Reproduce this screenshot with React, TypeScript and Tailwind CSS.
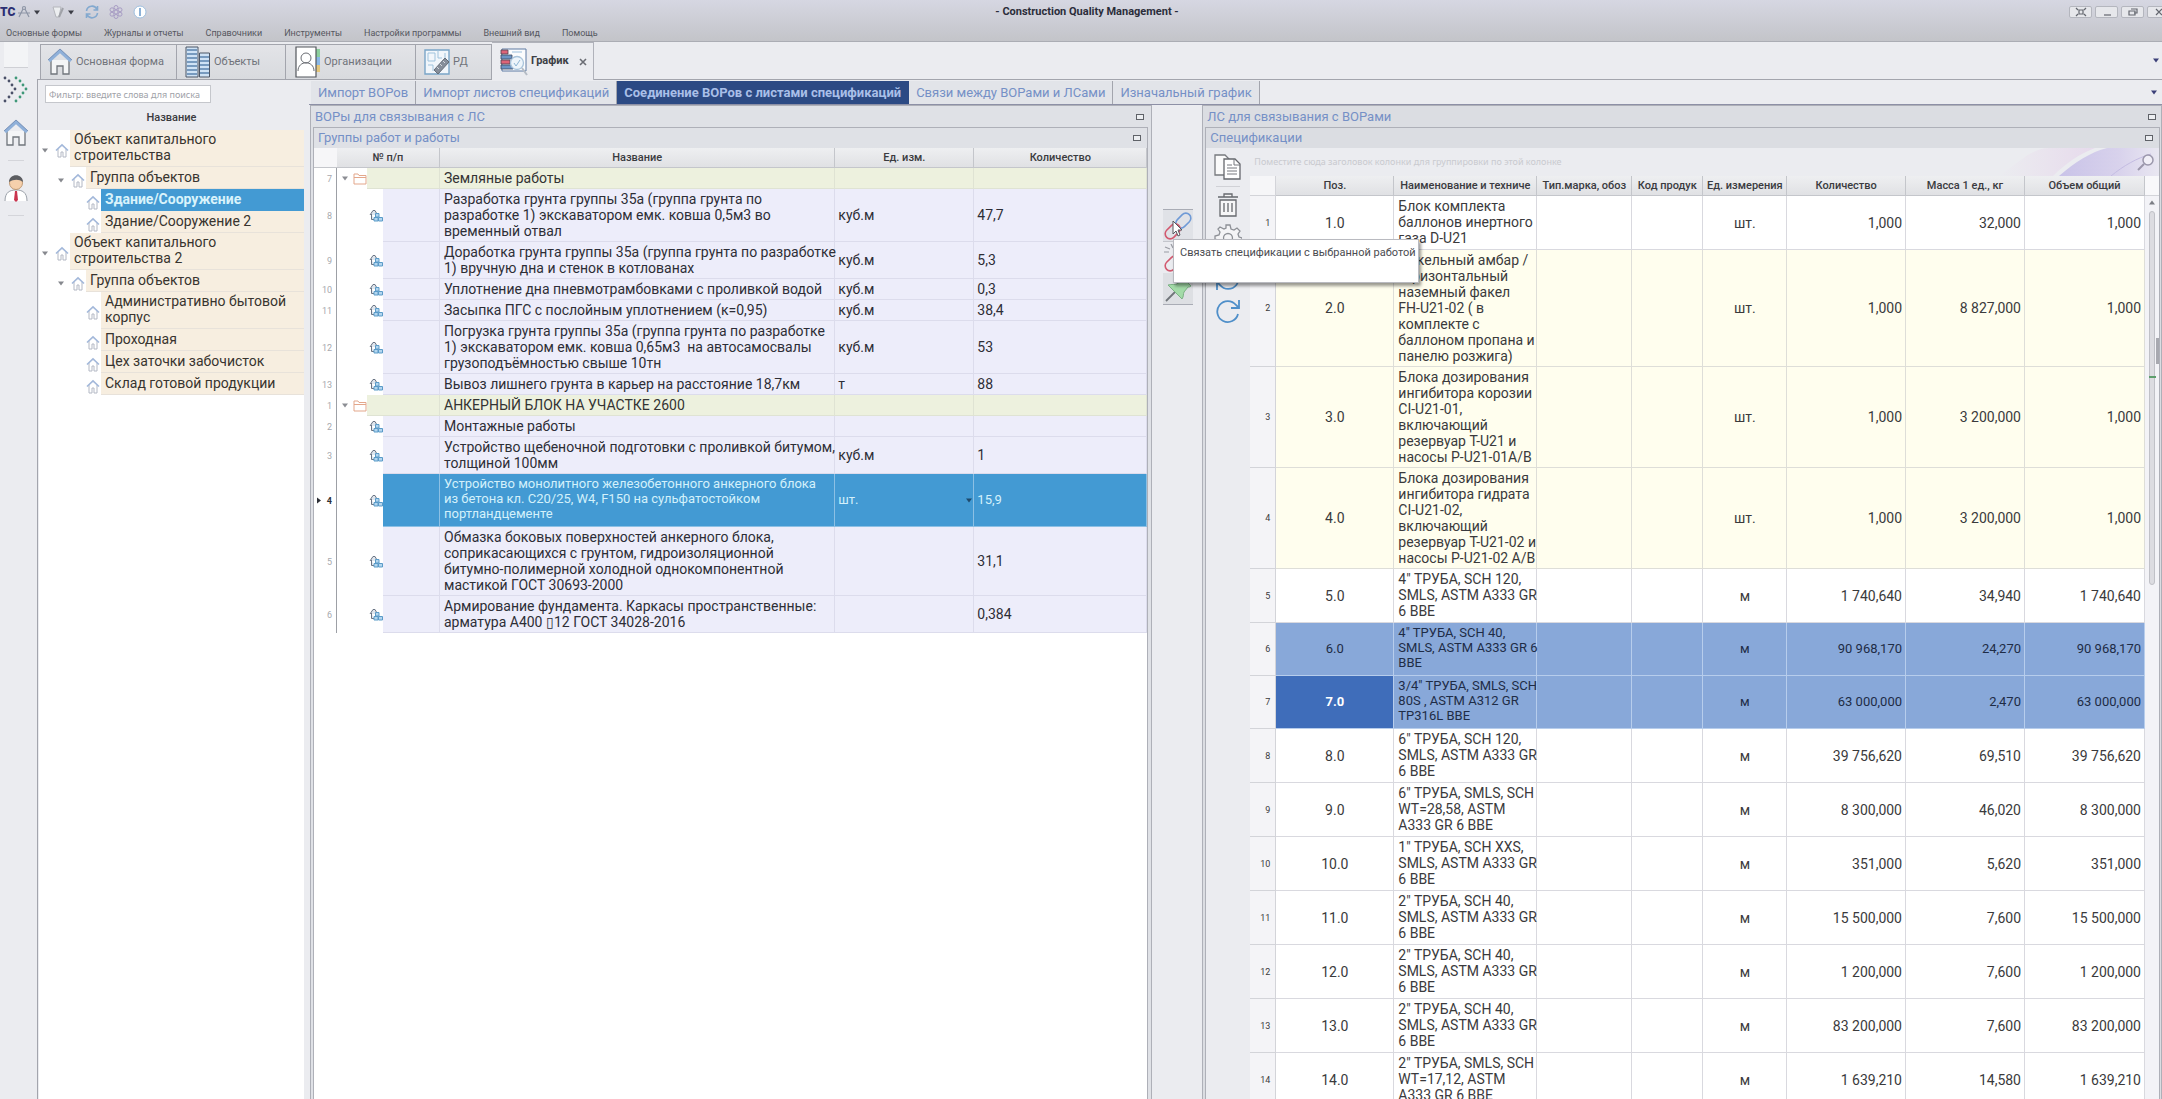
import React from "react";
import clsx from "clsx";

type TreeItem = {
  name: string;
  level: number;
  open?: boolean;
  selected?: boolean;
  tall?: boolean;
};

const tree: TreeItem[] = [
  { name: "Объект капитального\nстроительства", level: 0, open: true, tall: true },
  { name: "Группа объектов", level: 1, open: true },
  { name: "Здание/Сооружение", level: 2, selected: true },
  { name: "Здание/Сооружение 2", level: 2 },
  { name: "Объект капитального\nстроительства 2", level: 0, open: true, tall: true },
  { name: "Группа объектов", level: 1, open: true },
  { name: "Административно бытовой\nкорпус", level: 2, tall: true },
  { name: "Проходная", level: 2 },
  { name: "Цех заточки забочисток", level: 2 },
  { name: "Склад готовой продукции", level: 2 },
];

type Work = {
  n: number;
  name: string;
  unit?: string;
  qty?: string;
  group?: boolean;
  selected?: boolean;
};

const works: Work[] = [
  { n: 7, name: "Земляные работы", group: true },
  {
    n: 8,
    name: "Разработка грунта группы 35а (группа грунта по\nразработке 1) экскаватором емк. ковша 0,5м3 во\nвременный отвал",
    unit: "куб.м",
    qty: "47,7",
  },
  {
    n: 9,
    name: "Доработка грунта группы 35а (группа грунта по разработке\n1) вручную дна и стенок в котлованах",
    unit: "куб.м",
    qty: "5,3",
  },
  { n: 10, name: "Уплотнение дна пневмотрамбовками с проливкой водой", unit: "куб.м", qty: "0,3" },
  { n: 11, name: "Засыпка ПГС с послойным уплотнением (к=0,95)", unit: "куб.м", qty: "38,4" },
  {
    n: 12,
    name: "Погрузка грунта группы 35а (группа грунта по разработке\n1) экскаватором емк. ковша 0,65м3  на автосамосвалы\nгрузоподъёмностью свыше 10тн",
    unit: "куб.м",
    qty: "53",
  },
  { n: 13, name: "Вывоз лишнего грунта в карьер на расстояние 18,7км", unit: "т", qty: "88" },
  { n: 1, name: "АНКЕРНЫЙ БЛОК НА УЧАСТКЕ 2600", group: true },
  { n: 2, name: "Монтажные работы" },
  {
    n: 3,
    name: "Устройство щебеночной подготовки с проливкой битумом,\nтолщиной 100мм",
    unit: "куб.м",
    qty: "1",
  },
  {
    n: 4,
    name: "Устройство монолитного железобетонного анкерного блока\nиз бетона кл. C20/25, W4, F150 на сульфатостойком\nпортландцементе",
    unit: "шт.",
    qty: "15,9",
    selected: true,
  },
  {
    n: 5,
    name: "Обмазка боковых поверхностей анкерного блока,\nсоприкасающихся с грунтом, гидроизоляционной\nбитумно-полимерной холодной однокомпонентной\nмастикой ГОСТ 30693-2000",
    qty: "31,1",
  },
  {
    n: 6,
    name: "Армирование фундамента. Каркасы пространственные:\nарматура А400 ▯12 ГОСТ 34028-2016",
    qty: "0,384",
  },
];

type Spec = {
  name: string;
  unit: string;
  qty: string;
  mass: string;
  total: string;
  tone?: "cream" | "marked";
};

const specs: Spec[] = [
  { name: "Блок комплекта\nбаллонов инертного\nгаза D-U21", unit: "шт.", qty: "1,000", mass: "32,000", total: "1,000" },
  {
    name: "Факельный амбар /\nгоризонтальный\nназемный факел\nFH-U21-02 ( в\nкомплекте с\nбаллоном пропана и\nпанелю розжига)",
    unit: "шт.",
    qty: "1,000",
    mass: "8 827,000",
    total: "1,000",
    tone: "cream",
  },
  {
    name: "Блока дозирования\nингибитора корозии\nCI-U21-01,\nвключающий\nрезервуар T-U21 и\nнасосы P-U21-01A/B",
    unit: "шт.",
    qty: "1,000",
    mass: "3 200,000",
    total: "1,000",
    tone: "cream",
  },
  {
    name: "Блока дозирования\nингибитора гидрата\nCI-U21-02,\nвключающий\nрезервуар T-U21-02 и\nнасосы P-U21-02 A/B",
    unit: "шт.",
    qty: "1,000",
    mass: "3 200,000",
    total: "1,000",
    tone: "cream",
  },
  { name: '4" ТРУБА, SCH 120,\nSMLS, ASTM A333 GR\n6 BBE', unit: "м", qty: "1 740,640", mass: "34,940", total: "1 740,640" },
  { name: '4" ТРУБА, SCH 40,\nSMLS, ASTM A333 GR 6\nBBE', unit: "м", qty: "90 968,170", mass: "24,270", total: "90 968,170", tone: "marked" },
  { name: '3/4" ТРУБА, SMLS, SCH\n80S , ASTM A312 GR\nTP316L BBE', unit: "м", qty: "63 000,000", mass: "2,470", total: "63 000,000", tone: "marked" },
  { name: '6" ТРУБА, SCH 120,\nSMLS, ASTM A333 GR\n6 BBE', unit: "м", qty: "39 756,620", mass: "69,510", total: "39 756,620" },
  { name: '6" ТРУБА, SMLS, SCH\nWT=28,58, ASTM\nA333 GR 6 BBE', unit: "м", qty: "8 300,000", mass: "46,020", total: "8 300,000" },
  { name: '1" ТРУБА, SCH XXS,\nSMLS, ASTM A333 GR\n6 BBE', unit: "м", qty: "351,000", mass: "5,620", total: "351,000" },
  { name: '2" ТРУБА, SCH 40,\nSMLS, ASTM A333 GR\n6 BBE', unit: "м", qty: "15 500,000", mass: "7,600", total: "15 500,000" },
  { name: '2" ТРУБА, SCH 40,\nSMLS, ASTM A333 GR\n6 BBE', unit: "м", qty: "1 200,000", mass: "7,600", total: "1 200,000" },
  { name: '2" ТРУБА, SCH 40,\nSMLS, ASTM A333 GR\n6 BBE', unit: "м", qty: "83 200,000", mass: "7,600", total: "83 200,000" },
  { name: '2" ТРУБА, SMLS, SCH\nWT=17,12, ASTM\nA333 GR 6 BBE', unit: "м", qty: "1 639,210", mass: "14,580", total: "1 639,210" },
];

function HouseIcon({ className }: { className?: string }) {
  return (
    <svg viewBox="0 0 26 28" fill="none" className={className}>
      <path d="M4 12v14h6v-8h6v8h6V12" fill="#f4f5f7" stroke="#70757c" strokeWidth="1.3" />
      <path d="M2 13 13 3l11 10" stroke="#8fb0d9" strokeWidth="3.2" />
      <path d="M1 12 13 1l12 11" stroke="#7088ad" strokeWidth="0.8" />
    </svg>
  );
}

function SmallHouse() {
  return (
    <svg viewBox="0 0 14 15" fill="none" className="h-[15px] w-[14px] shrink-0">
      <path d="M3 6v8h3V9h2v5h3V6" stroke="#b3b8c4" strokeWidth="1" />
      <path d="M1 7.500 7 1.800l6 5.700" stroke="#a3b8da" strokeWidth="1.600" />
    </svg>
  );
}

function Caret({ className }: { className?: string }) {
  return (
    <svg viewBox="0 0 8 5" className={clsx("h-[5px] w-2 shrink-0", className)}>
      <path d="M1 0.500h6L4 4.500z" fill="currentColor" />
    </svg>
  );
}

function BuildingsIcon() {
  return (
    <svg viewBox="0 0 26 32" className="h-8 w-[26px]">
      <path d="M1 1h12v30H1z" fill="#cfe2f5" stroke="#4d5666" />
      <path d="M14.500 7h10v24h-10z" fill="#cfe2f5" stroke="#4d5666" />
      <path d="M2 4h10M2 8h10M2 12h10M2 16h10M2 20h10M2 24h10M2 28h10" stroke="#5b82ad" strokeWidth="1.600" />
      <path d="M15 11h9M15 15h9M15 19h9M15 23h9M15 27h9" stroke="#5b82ad" strokeWidth="1.600" />
    </svg>
  );
}

function ContactsIcon() {
  return (
    <svg viewBox="0 0 26 32" className="h-8 w-[26px]" fill="none">
      <path d="M21 3h4v8h-4z" fill="#8ccf9d" />
      <path d="M21 11h4v8h-4z" fill="#8ab8e6" />
      <path d="M21 19h4v7h-4z" fill="#e3c67c" />
      <path d="M1 1h20v30H1z" fill="#fff" stroke="#53565c" strokeWidth="1.200" />
      <circle cx="11" cy="12" r="5" stroke="#6a6d73" />
      <path d="M3 25c0-11 16-11 16 0" stroke="#6a6d73" />
    </svg>
  );
}

function BlueprintIcon() {
  return (
    <svg viewBox="0 0 26 28" className="h-7 w-[26px]" fill="none">
      <path d="M1 2h24v24H1z" fill="#f1f6fb" stroke="#7aa5c8" strokeWidth="1.400" />
      <path d="M4 5h7v8H4zM14 2v8h4M21 5v5M4 17h5v6" stroke="#9fc3dd" />
      <path d="m10 22 11-12 4 4-11 12z" fill="#868e9a" stroke="#666d78" />
      <path d="m13 19 2 2m1-5 2 2m1-5 2 2" stroke="#d4d8de" />
    </svg>
  );
}

function ChartIcon() {
  return (
    <svg viewBox="0 0 28 30" className="h-[30px] w-7" fill="none">
      <path d="M2 2h24v22H2z" fill="#fbfcfd" stroke="#5f7ba3" />
      <path d="M1 3h7v4H1zM1 13h9v4H1z" fill="#dd6478" stroke="#4b4154" strokeWidth="0.800" />
      <path d="M1 8h11v4H1zM1 18h12v4H1z" fill="#6c94c4" stroke="#3c4a63" strokeWidth="0.800" />
      <path d="M12 5h10" stroke="#9dc0dd" />
      <circle cx="17" cy="16" r="6.500" fill="#eef5fb" stroke="#a9c4db" strokeWidth="1.300" />
      <path d="m14 16 2 3 4-6" stroke="#8fb6d4" />
      <path d="m22 21 5 7" stroke="#b5bcc5" strokeWidth="2" />
    </svg>
  );
}

function PersonIcon() {
  return (
    <svg viewBox="0 0 24 28" className="h-7 w-6" fill="none">
      <path d="M1 27c0-9 5-11 11-11s11 2 11 11" fill="#fff" stroke="#9aa0a8" />
      <circle cx="12" cy="9" r="6.500" fill="#f6d0ac" stroke="#b4895f" strokeWidth="0.800" />
      <path d="M5 8c0-9 14-9 14 0-4-3-9-3-14 0z" fill="#5c5d61" />
      <path d="M11 17h2l1 9-2 2-2-2z" fill="#c9344e" />
    </svg>
  );
}

function DotsIcon() {
  const dots = [
    [2, 2], [6, 5], [9, 9], [12, 13], [9, 17], [6, 21], [2, 25],
  ];
  return (
    <svg viewBox="0 0 26 28" className="h-7 w-[26px]">
      {dots.map(([x, y]) => (
        <circle key={y} cx={x} cy={y} r="1.400" fill="#4a5068" />
      ))}
      {dots.map(([x, y]) => (
        <circle key={y} cx={x + 11} cy={y} r="1.400" fill="#3f9878" />
      ))}
    </svg>
  );
}

function FolderIcon() {
  return (
    <svg viewBox="0 0 14 12" className="h-3 w-[14px] shrink-0" fill="none">
      <path d="M1 11V1h4l1 1.500h7V11zM1 4.500h12" stroke="#e3a78b" />
    </svg>
  );
}

function WorkIcon() {
  return (
    <svg viewBox="0 0 14 13" className="h-[13px] w-[14px] shrink-0" fill="none">
      <path d="M1 6 4 1.500h2L8.500 6M2.500 5v5.500H5" fill="#dfe6ee" stroke="#6a7484" />
      <path d="M6.500 4.500H10V8H6.500zM5 8.500h4V12H5zM9.500 8.500h4V12h-4z" fill="#b3d6ef" stroke="#5a9bc8" />
    </svg>
  );
}

function CopyIcon() {
  return (
    <svg viewBox="0 0 28 28" className="size-7" fill="none">
      <path d="M1 2h10l4 4v16H1z" fill="#fafafa" stroke="#77797e" strokeWidth="1.300" />
      <path d="M10 6h11l5 5v15H10z" fill="#fff" stroke="#66686d" strokeWidth="1.300" />
      <path d="M20 6v6h6M13 12h5M13 15h10M13 18h10M13 21h10" stroke="#77797e" />
    </svg>
  );
}

function TrashIcon() {
  return (
    <svg viewBox="0 0 22 26" className="h-[26px] w-[22px]" fill="none" stroke="#66686d" strokeWidth="1.300">
      <path d="M1 5h20M7 5V2h8v3M3 8v16h16V8z" fill="#f6f6f7" />
      <path d="M7 11v9M11 11v9M15 11v9" />
    </svg>
  );
}

function GearIcon() {
  return (
    <svg viewBox="0 0 28 28" className="size-7" fill="none" stroke="#8d9096" strokeWidth="1.300">
      <path
        d="M12 2h4l1 4 3 1 3-2 3 3-2 3 1 3 3 1v3l-4 1-1 3 2 3-3 2-3-2-3 1-1 2h-3l-1-3-3-1-3 2-2-3 2-3-1-3-3-1v-3l4-1 1-3-2-3 2-2 4 2 2-1z"
        fill="#f4f4f6"
      />
      <circle cx="14" cy="15" r="4.500" />
    </svg>
  );
}

function ReloadIcon({ className }: { className?: string }) {
  return (
    <svg viewBox="0 0 26 26" className={clsx("size-[26px]", className)} fill="none" stroke="#4f8fc9" strokeWidth="1.800">
      <path d="M23 16a10.500 10.500 0 1 1-2-9l3 3" />
      <path d="M24 2v8h-8" />
    </svg>
  );
}

function LinkIcon({ broken }: { broken?: boolean }) {
  return (
    <svg viewBox="0 0 30 28" className="h-7 w-[30px]" fill="none" strokeWidth="1.600">
      <rect x="12" y="4" width="17" height="10" rx="5" transform="rotate(-45 20 9)" stroke="#6f9ad6" />
      <rect x="1" y="14" width="17" height="10" rx="5" transform="rotate(-45 10 19)" stroke="#d2596f" />
      {broken && <path d="M2 3l5 2M1 8h5M8 0l2 4" stroke="#9a9ca3" strokeWidth="1.200" />}
    </svg>
  );
}

function PinIcon() {
  return (
    <svg viewBox="0 0 28 26" className="h-[26px] w-7" fill="none">
      <path d="m2 24 10-10" stroke="#70757a" strokeWidth="1.800" />
      <path d="M4 8c4-1 7 0 9-1l5-4c0-1 0-2 1-2l8 8c-1 1-2 1-3 1l-4 5c-1 2 0 4-2 7z" fill="#a3dba8" stroke="#7bb184" />
    </svg>
  );
}

function MaxButton() {
  return (
    <button type="button" aria-label="Развернуть" className="flex h-4 w-4 items-center justify-center">
      <span className="h-[6px] w-[8px] border border-[#5f6268] bg-[#eceef1]" />
    </button>
  );
}

function TitleBar() {
  return (
    <div className="relative flex h-6 items-center">
      <span className="w-[17px] text-[12px] leading-4 font-black text-[#2c2f73]">ТС</span>
      <button type="button" aria-label="Построение" className="flex items-center gap-[2px] text-[#3b3d45]">
        <svg viewBox="0 0 14 14" className="size-[14px]" fill="none" stroke="#8d95a6" strokeWidth="1.200">
          <circle cx="7" cy="3" r="1.500" />
          <path d="M6 4 2 12M8 4l4 8M1 8h12" />
        </svg>
        <Caret />
      </button>
      <button type="button" aria-label="Отчеты" className="ml-[10px] flex items-center gap-[2px] text-[#3b3d45]">
        <svg viewBox="0 0 14 14" className="size-[14px]" fill="none">
          <path d="M2 2h8l-2 10H5z" fill="#eceef0" stroke="#b4b6bc" />
          <path d="m8 12 4-9" stroke="#a0a2a8" strokeWidth="2" />
        </svg>
        <Caret />
      </button>
      <button type="button" aria-label="Обновить" className="ml-[10px]">
        <svg viewBox="0 0 14 14" className="size-[14px]" fill="none" stroke="#83a9cf" strokeWidth="1.600">
          <path d="M1.500 6A5.500 5.500 0 0 1 12 4.500M12.500 8A5.500 5.500 0 0 1 2 9.500M12.500 1v4h-4M1.500 13V9h4" />
        </svg>
      </button>
      <button type="button" aria-label="Модули" className="ml-[10px]">
        <svg viewBox="0 0 14 14" className="size-[14px]" fill="none" stroke="#a79cc4">
          <circle cx="7" cy="7" r="2" />
          <circle cx="7" cy="2.500" r="2" />
          <circle cx="7" cy="11.500" r="2" />
          <circle cx="3" cy="4.800" r="2" />
          <circle cx="11" cy="4.800" r="2" />
          <circle cx="3" cy="9.200" r="2" />
          <circle cx="11" cy="9.200" r="2" />
        </svg>
      </button>
      <button type="button" aria-label="О программе" className="ml-[10px]">
        <svg viewBox="0 0 14 14" className="size-[14px]">
          <circle cx="7" cy="7" r="6" fill="#fff" stroke="#9fc0df" />
          <path d="M7 3v8" stroke="#6f9fce" strokeWidth="1.600" />
        </svg>
      </button>
      <h1 className="pointer-events-none absolute inset-x-0 top-1 pl-[12px] text-center text-[11px] leading-4 font-bold text-[#2b2d3a]">
        - Construction Quality Management -
      </h1>
      <div className="-mr-2 ml-auto flex gap-[3px]">
        {[
          "M2 2l2 2M12 2l-2 2M2 10l2-2M12 10l-2-2M5 4h4v4H5z",
          "M4 9h7",
          "M5 3h6v4H8M3 5h6v4H3z",
          "M4 3l6 6M10 3l-6 6",
        ].map((d, i) => (
          <button
            key={d}
            type="button"
            aria-label={["Во весь экран", "Свернуть", "Восстановить", "Закрыть"][i]}
            className="flex h-3 w-[23px] items-center justify-center rounded-[2px] border border-[#b4b6be] bg-[#e6e7eb]"
          >
            <svg viewBox="0 0 14 12" className="h-3 w-[14px]" fill="none" stroke="#63666e" strokeWidth="1.200">
              <path d={d} />
            </svg>
          </button>
        ))}
      </div>
    </div>
  );
}

function MainTab({ icon, text, className }: { icon: React.ReactNode; text: string; className?: string }) {
  return (
    <button
      type="button"
      className={clsx(
        "flex h-[35px] items-center gap-[3px] border-t border-r border-[#a3a5ad] bg-linear-to-b from-[#e3e4e8] to-[#d8dade] text-[11px] whitespace-nowrap text-[#70737a]",
        className
      )}
    >
      {icon}
      {text}
    </button>
  );
}

const subTabs = [
  "Импорт ВОРов",
  "Импорт листов спецификаций",
  "Соединение ВОРов с листами спецификаций",
  "Связи между ВОРами и ЛСами",
  "Изначальный график",
];

const th =
  "border-r border-b border-[#c4c6cb] bg-linear-to-b from-[#eeeff1] to-[#e0e1e4] p-0 text-center text-[11px] leading-4 font-medium text-[#3a3b3f] whitespace-nowrap";

function WorksTable() {
  return (
    <table className="w-full table-fixed border-separate border-spacing-0">
      <colgroup>
        <col className="w-[23px]" />
        <col className="w-[103px]" />
        <col />
        <col className="w-[139px]" />
        <col className="w-[173px]" />
      </colgroup>
      <thead>
        <tr className="h-5">
          <th className="border-b border-[#c4c6cb] bg-[#f6f6f8] p-0" aria-label="Строка" />
          <th className={th}>№ п/п</th>
          <th className={th}>Название</th>
          <th className={th}>Ед. изм.</th>
          <th className={th}>Количество</th>
        </tr>
      </thead>
      <tbody>
        {works.map((w) => {
          const cell = clsx(
            "border-r border-b p-0",
            w.group && "border-[#dfe3d3] bg-[#edf1de]",
            w.selected && "border-[#8cc0e4] bg-[#439ad3] text-[#d3f1fb]",
            !w.group && !w.selected && "border-[#dcdcec] bg-[#ededfa] text-[#2d2e36]"
          );
          return (
            <tr key={w.n} className={w.selected ? "h-[53px]" : "h-[21px]"}>
              <td
                className={clsx(
                  "border-r border-[#9da0a6] p-0 text-[9px] leading-4",
                  w.selected ? "font-bold text-[#2c2e35]" : "text-[#a7a9ae]"
                )}
              >
                <div className={clsx("flex items-center pr-1 pl-px", w.selected ? "justify-between" : "justify-end")}>
                  {w.selected && <Caret className="-rotate-90" />}
                  {w.n}
                </div>
              </td>
              <td className="h-px p-0">
                <div className="flex h-full items-stretch">
                  {w.group ? (
                    <div className="flex w-[30px] shrink-0 items-center gap-1 pl-1 text-[#8c8e94]">
                      <Caret />
                      <FolderIcon />
                    </div>
                  ) : (
                    <div className="flex w-[46px] shrink-0 items-center justify-end">
                      <WorkIcon />
                    </div>
                  )}
                  <div className={clsx("flex-1", cell)} />
                </div>
              </td>
              <td
                className={clsx(
                  cell,
                  "py-[2px] pl-1 align-top whitespace-pre",
                  w.selected ? "text-[13px] leading-[15px]" : "text-[14px] leading-4"
                )}
              >
                {w.name}
              </td>
              <td className={clsx(cell, "pl-[3px] leading-4", w.selected ? "text-[13px]" : "text-[14px]")}>
                <div className="flex items-center justify-between">
                  <span>{w.unit}</span>
                  {w.selected && <Caret className="text-[#1f4a6c]" />}
                </div>
              </td>
              <td className={clsx(cell, "pl-[3px] leading-4", w.selected ? "text-[13px]" : "text-[14px]")}>{w.qty}</td>
            </tr>
          );
        })}
      </tbody>
    </table>
  );
}

function SpecsTable() {
  return (
    <table className="w-full table-fixed border-separate border-spacing-0 text-[#3a3a3c]">
      <colgroup>
        <col className="w-[26px]" />
        <col className="w-[118px]" />
        <col className="w-[143px]" />
        <col className="w-[95px]" />
        <col className="w-[71px]" />
        <col className="w-[84px]" />
        <col />
        <col className="w-[119px]" />
        <col className="w-[120px]" />
      </colgroup>
      <thead>
        <tr className="h-5">
          <th className="border-r border-b border-[#d3d4d9] bg-[#f6f6f8] p-0" aria-label="Строка" />
          {[
            "Поз.",
            "Наименование и техниче",
            "Тип.марка, обоз",
            "Код продук",
            "Ед. измерения",
            "Количество",
            "Масса 1 ед., кг",
            "Объем общий",
          ].map((h) => (
            <th key={h} className={th}>
              {h}
            </th>
          ))}
        </tr>
      </thead>
      <tbody>
        {specs.map((s, i) => {
          const marked = s.tone === "marked";
          const active = i === 6;
          const cell = clsx(
            "border-r border-b p-0 leading-4",
            s.tone === "cream" && "border-[#deded8] bg-[#fffeee]",
            marked && "border-[#b7cdec] bg-[#88a8d9] text-[13px] text-[#1e2c46]",
            !s.tone && "border-[#d9d9df] bg-white",
            !marked && "text-[14px]"
          );
          return (
            <tr key={i} className={marked ? "h-[53px]" : "h-[54px]"}>
              <td className="border-r border-b border-[#d3d4d9] bg-[#f4f4f7] p-0 pr-[5px] text-right text-[9px] leading-4">
                {i + 1}
              </td>
              <td className={clsx(cell, "text-center", active && "!bg-[#3f6dba] font-bold !text-white")}>{i + 1}.0</td>
              <td className={clsx(cell, "py-[2px] pl-1 align-top whitespace-pre", marked && "!leading-[15px]")}>
                {s.name}
              </td>
              <td className={cell} />
              <td className={cell} />
              <td className={clsx(cell, "text-center")}>{s.unit}</td>
              <td className={clsx(cell, "pr-[3px] text-right")}>{s.qty}</td>
              <td className={clsx(cell, "pr-[3px] text-right")}>{s.mass}</td>
              <td className={clsx(cell, "pr-[3px] text-right")}>{s.total}</td>
            </tr>
          );
        })}
      </tbody>
    </table>
  );
}

const panelTitle = "flex items-center justify-between text-[13px] text-[#7590c6]";

export default function App() {
  return (
    <div className="flex h-screen flex-col overflow-hidden bg-[#ebecf0] font-['Roboto','Noto_Sans',sans-serif] text-[#333]">
      {/* Title and menu */}
      <header className="h-[42px] shrink-0 border-b border-[#abadb4] bg-linear-to-b from-[#d6d7e2] to-[#c3c4c9]">
        <TitleBar />
        <nav className="flex gap-[22px] pl-[6px] text-[9px] leading-[18px] text-[#55575e]">
          {[
            "Основные формы",
            "Журналы и отчеты",
            "Справочники",
            "Инструменты",
            "Настройки программы",
            "Внешний вид",
            "Помощь",
          ].map((m) => (
            <button key={m} type="button">
              {m}
            </button>
          ))}
        </nav>
      </header>

      <div className="flex min-h-0 flex-1">
        {/* Icon rail */}
        <aside className="flex w-[37px] shrink-0 flex-col items-center pr-[6px]">
          <div className="mb-2 h-[26px] w-6 border-b border-[#cfd0d5] bg-[#f3f4f6]" />
          <button type="button" aria-label="Развернуть меню">
            <DotsIcon />
          </button>
          <button type="button" aria-label="Основная форма" className="mt-[15px]">
            <HouseIcon className="h-7 w-[26px]" />
          </button>
          <div className="my-[13px] w-4 border-b border-[#d4d5da]" />
          <button type="button" aria-label="Пользователь">
            <PersonIcon />
          </button>
          <div className="my-[13px] w-4 border-b border-[#d4d5da]" />
        </aside>

        <div className="flex min-w-0 flex-1 flex-col">
          {/* Main tabs */}
          <div className="flex h-[38px] shrink-0 items-end border-b border-[#a3a5ad] pl-[3px]">
            <MainTab
              icon={<HouseIcon className="h-[30px] w-[26px]" />}
              text="Основная форма"
              className="w-[137px] border-l pl-[6px]"
            />
            <MainTab icon={<BuildingsIcon />} text="Объекты" className="w-[109px] pl-2" />
            <MainTab icon={<ContactsIcon />} text="Организации" className="w-[130px] pl-[9px]" />
            <MainTab icon={<BlueprintIcon />} text="РД" className="w-[76px] pl-2" />
            <div className="-mb-px flex h-[38px] w-[102px] items-center border-t border-r border-[#b0b2ba] bg-[#ebecf0] pl-2">
              <button type="button" className="flex items-center gap-[3px] text-[11px] font-bold text-[#3d3f46]">
                <ChartIcon />
                График
              </button>
              <button type="button" aria-label="Закрыть вкладку" className="mr-[6px] ml-auto text-[#6b6d74]">
                <svg viewBox="0 0 8 8" className="size-2" stroke="currentColor" strokeWidth="1.600">
                  <path d="M1 1l6 6M7 1 1 7" />
                </svg>
              </button>
            </div>
            <button type="button" aria-label="Список вкладок" className="mr-[2px] mb-[16px] ml-auto text-[#3b3f78]">
              <Caret />
            </button>
          </div>

          <div className="flex min-h-0 flex-1">
            {/* Objects tree */}
            <section className="flex w-[268px] shrink-0 flex-col border-l border-[#a3a5ad]">
              <div className="flex h-[23px] items-end pl-[7px]">
                <input
                  type="text"
                  aria-label="Фильтр"
                  placeholder="Фильтр: введите слова для поиска"
                  className="h-[18px] w-[166px] border border-[#c5c7cc] bg-white px-[3px] font-['Noto_Sans',sans-serif] text-[9px] placeholder:text-[#a0a2a8]"
                />
              </div>
              <h2 className="h-[27px] pt-[7px] text-center text-[11px] leading-4 font-medium text-[#3a3b3f]">Название</h2>
              <ul className="mr-px ml-px flex-1 bg-white text-[14px] leading-4">
                {tree.map((t, i) => (
                  <li
                    key={i}
                    className={clsx(
                      "flex",
                      t.tall ? "h-[37px]" : "h-[22px]",
                      t.level === 1 && "pl-4",
                      t.level === 2 && "pl-[31px]"
                    )}
                  >
                    <div className="flex w-[31px] shrink-0 items-center justify-end gap-[6px] pt-1 pr-px text-[#86888e]">
                      {t.open && <Caret />}
                      <SmallHouse />
                    </div>
                    <button
                      type="button"
                      className={clsx(
                        "flex-1 border-b pb-[2px] pl-1 text-left whitespace-pre",
                        t.selected
                          ? "border-[#439ad3] bg-[#439ad3] font-bold text-[#d9f3fb]"
                          : "border-[#e8e2da] bg-[#f7eee0] text-[#38342f]"
                      )}
                    >
                      {t.name}
                    </button>
                  </li>
                ))}
              </ul>
            </section>

            {/* Working area */}
            <main className="flex min-w-0 flex-1 flex-col">
              <div className="ml-1 flex h-[25px] shrink-0 items-end border-b border-[#8d90a6] pl-[2px]">
                {subTabs.map((t, i) => (
                  <button
                    key={t}
                    type="button"
                    className={clsx(
                      "h-[23px] border-r px-[7px] text-[13px] whitespace-nowrap",
                      i === 2
                        ? "border-[#2c4a84] bg-[#2c4a84] font-bold text-[#a9bfe8]"
                        : "border-[#a3a5ad] bg-[#e2e4e9] text-[#7590c6]"
                    )}
                  >
                    {t}
                  </button>
                ))}
                <button type="button" aria-label="Список страниц" className="mr-1 mb-[9px] ml-auto text-[#3b3f78]">
                  <Caret />
                </button>
              </div>

              <div className="flex min-h-0 flex-1 pl-[5px]">
                <section className="flex min-w-0 flex-[840] flex-col border-x border-t border-[#aeb0b8] bg-[#dfe1e6] pr-[3px] pl-[2px]">
                  <h2 className={clsx(panelTitle, "h-[21px] pl-[2px]")}>
                    ВОРы для связывания с ЛС
                    <MaxButton />
                  </h2>
                  <div className="flex min-h-0 flex-1 flex-col overflow-hidden border-x border-t border-[#aeb0b8] bg-white">
                    <h3 className={clsx(panelTitle, "h-5 shrink-0 bg-[#dfe1e6] pr-[2px] pl-1")}>
                      Группы работ и работы
                      <MaxButton />
                    </h3>
                    <WorksTable />
                  </div>
                </section>

                {/* Link buttons */}
                <div className="w-[50px] shrink-0 px-[11px] pt-[104px]">
                  <button
                    type="button"
                    aria-label="Связать"
                    className="flex h-8 w-[30px] items-center border-t border-[#a9acb5] bg-[#e0e2e7]"
                  >
                    <LinkIcon />
                  </button>
                  <button
                    type="button"
                    aria-label="Разорвать связь"
                    className="flex h-8 w-[30px] items-center border-t border-[#c4c6cc]"
                  >
                    <LinkIcon broken />
                  </button>
                  <button
                    type="button"
                    aria-label="Закрепить"
                    className="flex h-[32px] w-[30px] items-end justify-center border-b border-[#a9acb5] bg-[#dddfe3] pb-px"
                  >
                    <PinIcon />
                  </button>
                </div>

                <section className="flex min-w-0 flex-[960] flex-col border-x border-t border-[#aeb0b8] bg-[#dbdde2] pr-px pl-[2px]">
                  <h2 className={clsx(panelTitle, "h-[21px] pl-[2px]")}>
                    ЛС для связывания с ВОРами
                    <MaxButton />
                  </h2>
                  <div className="flex min-h-0 flex-1 flex-col overflow-hidden border-x border-t border-[#aeb0b8]">
                    <h3 className={clsx(panelTitle, "h-5 shrink-0 pr-[2px] pl-1")}>
                      Спецификации
                      <MaxButton />
                    </h3>
                    <div className="flex min-h-0 flex-1 bg-[#ebecf0]">
                      <div className="flex w-[44px] shrink-0 flex-col items-center pt-[5px]">
                        <button type="button" aria-label="Копировать">
                          <CopyIcon />
                        </button>
                        <div className="my-[5px] w-6 border-b border-[#d0d1d6]" />
                        <button type="button" aria-label="Удалить">
                          <TrashIcon />
                        </button>
                        <button type="button" aria-label="Настройки" className="mt-[5px]">
                          <GearIcon />
                        </button>
                        <button type="button" aria-label="Синхронизировать" className="mt-[15px]">
                          <ReloadIcon className="rotate-180" />
                        </button>
                        <button type="button" aria-label="Обновить таблицу" className="mt-[6px]">
                          <ReloadIcon />
                        </button>
                      </div>
                      <div className="flex min-w-0 flex-1 flex-col">
                        <div className="flex h-7 shrink-0 items-center justify-between pl-1">
                          <p className="font-['Noto_Sans',sans-serif] text-[9px] text-[#c9cacf]">
                            Поместите сюда заголовок колонки для группировки по этой колонке
                          </p>
                          <svg viewBox="0 0 160 28" className="h-7 w-40">
                            <defs>
                              <linearGradient id="pink" x1="0" x2="1">
                                <stop offset="0" stopColor="#e9dcec" stopOpacity="0" />
                                <stop offset="1" stopColor="#e6daec" />
                              </linearGradient>
                              <linearGradient id="violet" x1="0" x2="1">
                                <stop offset="0" stopColor="#c9c3e8" />
                                <stop offset="0.6" stopColor="#d8d2ec" />
                                <stop offset="1" stopColor="#e9e7f1" />
                              </linearGradient>
                            </defs>
                            <path d="M0 28C20 14 34 0 50 0h46C80 6 66 16 54 28z" fill="url(#pink)" />
                            <path d="M60 28C76 14 92 4 108 0h52v28z" fill="url(#violet)" />
                            <path d="M112 28c12-10 26-18 40-22" stroke="#c4bce2" fill="none" />
                            <circle cx="149" cy="12" r="5" fill="#f1eff7" stroke="#9b97ab" strokeWidth="1.500" />
                            <path d="m145 16-6 6" stroke="#9b97ab" strokeWidth="2" />
                          </svg>
                        </div>
                        <div className="flex min-h-0 flex-1 overflow-hidden">
                          <div className="min-w-0 flex-1">
                            <SpecsTable />
                          </div>
                          <div className="flex w-[14px] shrink-0 flex-col items-center bg-[#f3f3f7]">
                            <div className="h-5 w-full shrink-0 border-b border-[#d3d4d9] bg-[#f8f8fa]" />
                            <Caret className="mt-1 rotate-180 text-[#7c7e85]" />
                            <div className="relative mt-[6px] h-[374px] w-[6px] rounded-full border border-[#c0c1c7] bg-[#dcdce1]">
                              <span className="absolute top-[164px] -left-px h-[2px] w-[7px] bg-[#5d9e6c]" />
                              <span className="absolute top-[126px] left-[6px] h-[26px] w-[3px] bg-[#a8a9b0]" />
                            </div>
                          </div>
                        </div>
                      </div>
                    </div>
                  </div>
                </section>
              </div>
            </main>
          </div>
        </div>
      </div>

      {/* Tooltip and pointer over the link button */}
      <div
        role="tooltip"
        className="absolute top-[239px] left-[1173px] h-[44px] w-[246px] border border-[#b9bac0] bg-white pt-[5px] pl-[6px] text-[11px] leading-4 whitespace-nowrap text-[#4a4b50] shadow-[2px_3px_3px_rgba(0,0,0,0.4)]"
      >
        Связать спецификации с выбранной работой
      </div>
      <svg viewBox="0 0 12 18" className="absolute top-[220px] left-[1172px] h-[18px] w-3">
        <path d="M1 1v13l3-3 2 5 2-1-2-5h4z" fill="#fff" stroke="#55575c" />
      </svg>
    </div>
  );
}
